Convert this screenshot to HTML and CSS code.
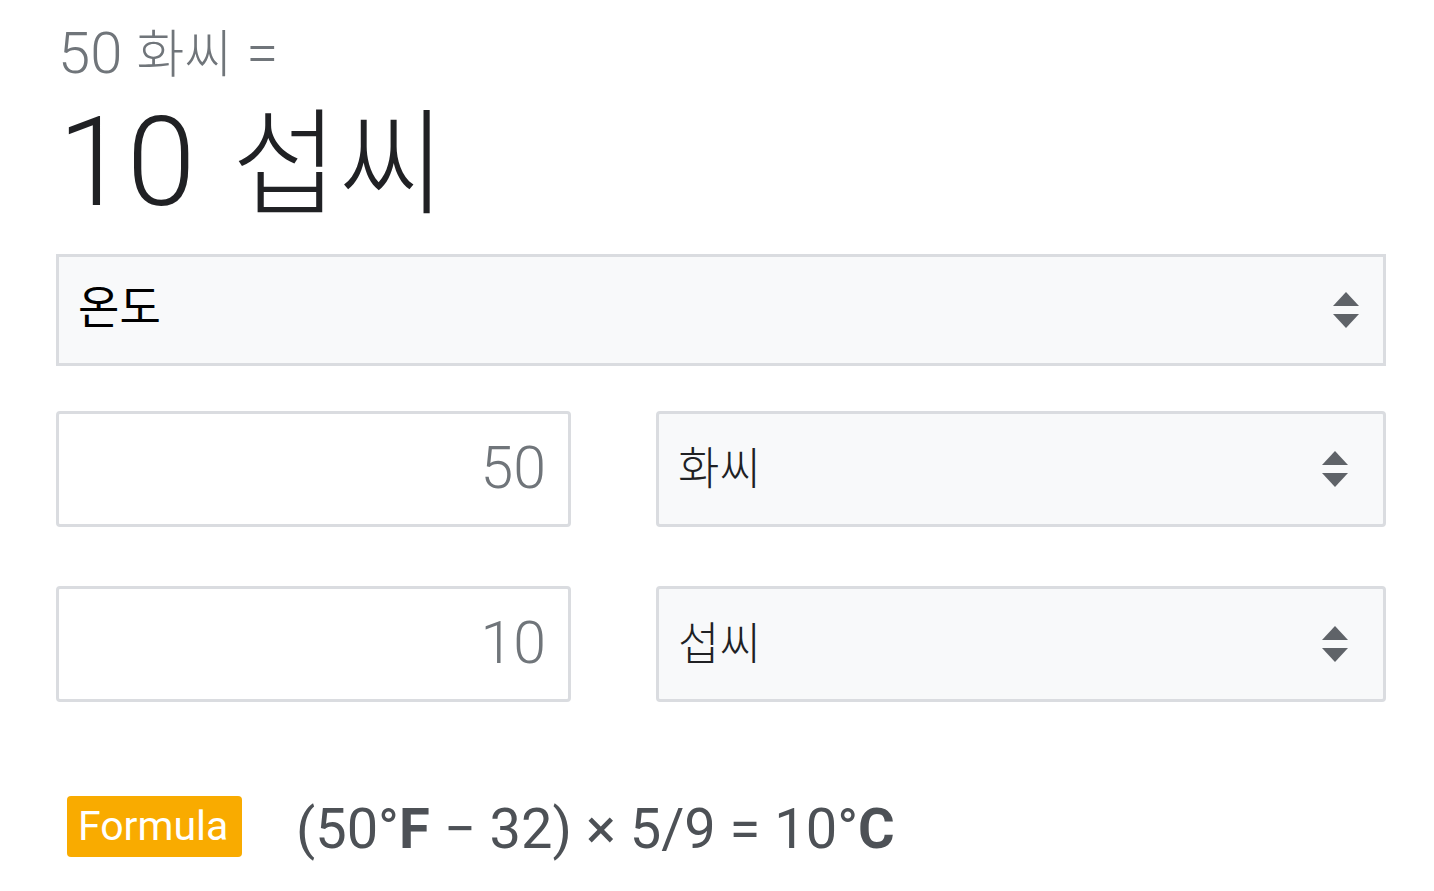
FILE: index.html
```html
<!DOCTYPE html>
<html lang="ko">
<head>
<meta charset="utf-8">
<link rel="stylesheet" href="styles.css">
</head>
<body>
<div class="conv">
  <div class="from">50 <span class="ko">화씨</span> =</div>
  <div class="to">10 <span class="ko">섭씨</span></div>

  <div class="select wide">
    <span class="label">온도</span>
    <span class="arrows"><span class="up"></span><span class="down"></span></span>
  </div>

  <div class="row">
    <div class="input">50</div>
    <div class="select unit">
      <span class="label">화씨</span>
      <span class="arrows"><span class="up"></span><span class="down"></span></span>
    </div>
  </div>

  <div class="row">
    <div class="input">10</div>
    <div class="select unit">
      <span class="label">섭씨</span>
      <span class="arrows"><span class="up"></span><span class="down"></span></span>
    </div>
  </div>

  <div class="formula">
    <span class="badge">Formula</span>
    <span class="expr">(50°<b>F</b> − 32) × 5/9 = 10°<b>C</b></span>
  </div>
</div>
</body>
</html>
```

FILE: styles.css
```css
html, body {
  margin: 0;
  padding: 0;
  background: #fff;
}
body {
  font-family: Roboto, "Noto Sans CJK KR", sans-serif;
}
.conv {
  padding: 16px 48px 0 56px;
  width: 1330px;
}
.from {
  font-size: 58px;
  line-height: 74px;
  color: #70757a;
  padding-left: 2px;
  font-weight: 300;
}
.from .ko {
  font-size: 52px;
}
.to {
  font-size: 124px;
  line-height: 140px;
  color: #202124;
  padding-left: 2px;
  margin-bottom: 19px;
  font-weight: 300;
}
.to .ko {
  font-size: 116px;
  margin-left: 6px;
}
.select {
  box-sizing: border-box;
  background: #f8f9fa;
  border: 3px solid #dadce0;
  display: flex;
  align-items: center;
  justify-content: space-between;
  color: #202124;
}
.select.wide {
  height: 112px;
  padding: 0 24px 0 19px;
}
.select.wide .label {
  color: #000;
  font-size: 45px;
  margin-top: -12px;
}
.row {
  display: flex;
  margin-top: 45px;
  gap: 85px;
}
.row + .row {
  margin-top: 59px;
}
.input {
  box-sizing: border-box;
  width: 515px;
  height: 116px;
  border: 3px solid #dadce0;
  border-radius: 4px;
  text-align: right;
  font-size: 59px;
  line-height: 108px;
  color: #70757a;
  padding-right: 22px;
  font-weight: 300;
}
.select.unit {
  width: 730px;
  height: 116px;
  border-radius: 4px;
  padding: 0 35px 0 19px;
}
.select.unit .label {
  font-size: 45px;
  color: #202124;
  font-weight: 300;
  margin-top: -8px;
}
.arrows {
  display: flex;
  flex-direction: column;
  gap: 8px;
}
.up, .down {
  width: 0;
  height: 0;
  border-left: 13px solid transparent;
  border-right: 13px solid transparent;
}
.up { border-bottom: 14px solid #5f6368; }
.down { border-top: 14px solid #5f6368; }
.formula {
  display: flex;
  align-items: center;
  margin-top: 88px;
  padding-left: 11px;
}
.badge {
  background: #f9ab00;
  color: #fff;
  font-size: 41px;
  line-height: 61px;
  padding: 0 12px 0 11px;
  border-radius: 4px;
  width: 152px;
}
.expr {
  margin-left: 54px;
  margin-top: 6px;
  font-size: 56px;
  color: #4d5156;
}
.expr b {
  font-weight: 700;
}
```
